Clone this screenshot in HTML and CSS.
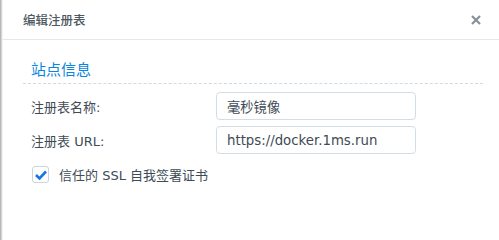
FILE: index.html
```html
<!DOCTYPE html>
<html lang="zh-CN">
<head>
<meta charset="utf-8">
<title>编辑注册表</title>
<link rel="stylesheet" href="styles.css">
</head>
<body>
<div class="dialog">
  <div class="header">
    <span class="title">编辑注册表</span>
    <span class="close" aria-label="关闭">
      <svg width="10" height="10" viewBox="0 0 10 10"><path d="M1 1 L9 9 M9 1 L1 9" stroke="#8a9099" stroke-width="2.2" stroke-linecap="butt"/></svg>
    </span>
  </div>
  <div class="body">
    <div class="section-title">站点信息</div>
    <div class="form">
      <div class="row">
        <label class="label">注册表名称:</label>
        <div class="input">毫秒镜像</div>
      </div>
      <div class="row">
        <label class="label">注册表 URL:</label>
        <div class="input">https://docker.1ms.run</div>
      </div>
      <div class="check-row">
        <span class="checkbox">
          <svg width="14" height="12" viewBox="0 0 14 12"><path d="M2 6 L5.5 9.5 L12 2.5" fill="none" stroke="#1677e0" stroke-width="2.6"/></svg>
        </span>
        <span class="check-label">信任的 SSL 自我签署证书</span>
      </div>
    </div>
  </div>
</div>
</body>
</html>
```

FILE: styles.css
```css
html, body {
  margin: 0;
  padding: 0;
}
body {
  width: 499px;
  height: 203px;
  overflow: hidden;
  background: linear-gradient(to right, #a9a9a9 0, #d6d6d6 1.5px, #f2f2f2 2.5px, #ffffff 3px);
  font-family: "DejaVu Sans", "Noto Sans CJK SC", sans-serif;
  color: #414b55;
}
.dialog {
  margin-left: 3px;
}
.header {
  height: 39px;
  border-bottom: 1px solid #e3e8ec;
  display: flex;
  align-items: center;
  justify-content: space-between;
  padding: 0 18px 0 20px;
}
.title {
  font-size: 12.5px;
  font-weight: 500;
  color: #4e5862;
  font-family: "Noto Sans CJK SC", sans-serif;
}
.close {
  display: flex;
  width: 10px;
  height: 10px;
  margin-top: 1px;
}
.body {
  padding: 19px 16px 0 20px;
}
.section-title {
  font-family: "Noto Sans CJK SC", sans-serif;
  font-size: 15px;
  line-height: 20px;
  color: #0a86e0;
  padding: 0 8px 4px;
  border-bottom: 1px dashed #d3d9df;
}
.form {
  padding: 8px 0 0 8px;
}
.row {
  display: flex;
  align-items: center;
  margin-bottom: 6px;
}
.label {
  width: 185px;
  font-size: 13px;
  color: #414b55;
}
.input {
  box-sizing: border-box;
  width: 200px;
  height: 28px;
  border: 1px solid #d3dde6;
  border-radius: 4px;
  padding: 0 10px;
  display: flex;
  align-items: center;
  font-size: 13.3px;
  color: #414b55;
}
.check-row {
  display: flex;
  align-items: center;
  margin-top: 11px;
}
.checkbox {
  box-sizing: border-box;
  width: 17px;
  height: 17px;
  margin-left: 1px;
  border: 1px solid #c9d4de;
  border-radius: 3px;
  display: flex;
  align-items: center;
  justify-content: center;
}
.check-label {
  margin-left: 10px;
  font-size: 13px;
  color: #414b55;
}
```
